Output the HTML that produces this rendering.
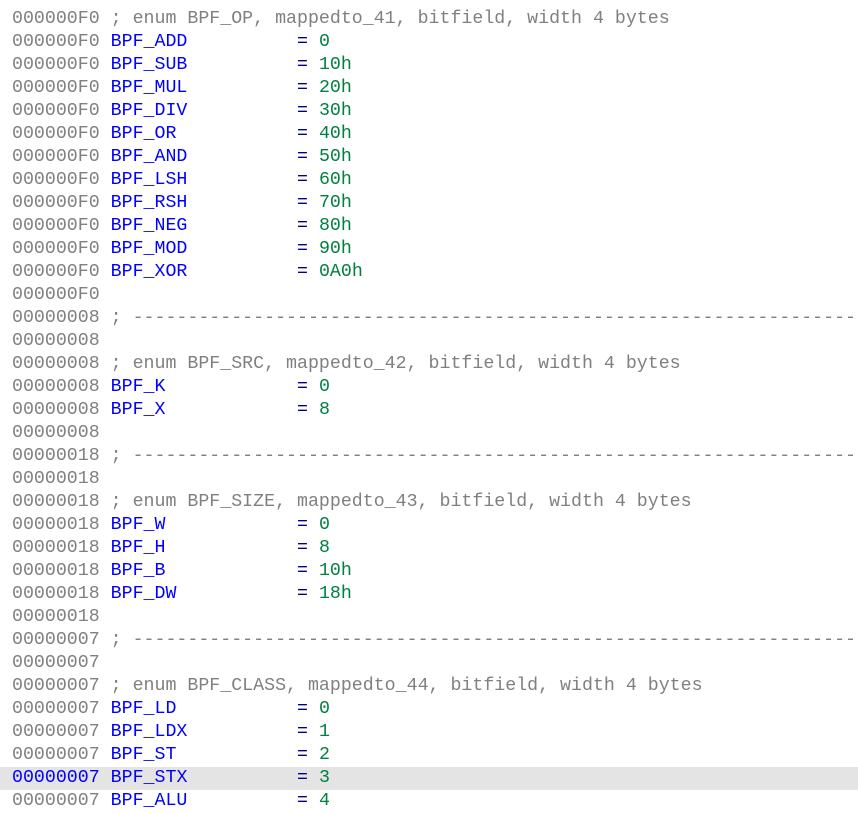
<!DOCTYPE html>
<html><head><style>
body{margin:0;background:#fff;width:858px;height:814px;overflow:hidden}
pre{margin:0;padding:8px 0 0 12px;font:18.27px/23px "Liberation Mono",monospace;color:#808080;white-space:pre}
.l{display:block;height:23px;overflow:hidden}
.h{background:#e4e4e4;margin-left:-12px;padding-left:12px}
.h .a{color:#0000ff}
.b{color:#0000ff}.e{color:#000080}.n{color:#008040}.c{color:#808080}
</style></head><body><pre><span class="l">000000F0 ; enum BPF_OP, mappedto_41, bitfield, width 4 bytes</span><span class="l">000000F0 <span class="b">BPF_ADD</span>          <span class="e">=</span> <span class="n">0</span></span><span class="l">000000F0 <span class="b">BPF_SUB</span>          <span class="e">=</span> <span class="n">10h</span></span><span class="l">000000F0 <span class="b">BPF_MUL</span>          <span class="e">=</span> <span class="n">20h</span></span><span class="l">000000F0 <span class="b">BPF_DIV</span>          <span class="e">=</span> <span class="n">30h</span></span><span class="l">000000F0 <span class="b">BPF_OR</span>           <span class="e">=</span> <span class="n">40h</span></span><span class="l">000000F0 <span class="b">BPF_AND</span>          <span class="e">=</span> <span class="n">50h</span></span><span class="l">000000F0 <span class="b">BPF_LSH</span>          <span class="e">=</span> <span class="n">60h</span></span><span class="l">000000F0 <span class="b">BPF_RSH</span>          <span class="e">=</span> <span class="n">70h</span></span><span class="l">000000F0 <span class="b">BPF_NEG</span>          <span class="e">=</span> <span class="n">80h</span></span><span class="l">000000F0 <span class="b">BPF_MOD</span>          <span class="e">=</span> <span class="n">90h</span></span><span class="l">000000F0 <span class="b">BPF_XOR</span>          <span class="e">=</span> <span class="n">0A0h</span></span><span class="l">000000F0</span><span class="l">00000008 ; ----------------------------------------------------------------------</span><span class="l">00000008</span><span class="l">00000008 ; enum BPF_SRC, mappedto_42, bitfield, width 4 bytes</span><span class="l">00000008 <span class="b">BPF_K</span>            <span class="e">=</span> <span class="n">0</span></span><span class="l">00000008 <span class="b">BPF_X</span>            <span class="e">=</span> <span class="n">8</span></span><span class="l">00000008</span><span class="l">00000018 ; ----------------------------------------------------------------------</span><span class="l">00000018</span><span class="l">00000018 ; enum BPF_SIZE, mappedto_43, bitfield, width 4 bytes</span><span class="l">00000018 <span class="b">BPF_W</span>            <span class="e">=</span> <span class="n">0</span></span><span class="l">00000018 <span class="b">BPF_H</span>            <span class="e">=</span> <span class="n">8</span></span><span class="l">00000018 <span class="b">BPF_B</span>            <span class="e">=</span> <span class="n">10h</span></span><span class="l">00000018 <span class="b">BPF_DW</span>           <span class="e">=</span> <span class="n">18h</span></span><span class="l">00000018</span><span class="l">00000007 ; ----------------------------------------------------------------------</span><span class="l">00000007</span><span class="l">00000007 ; enum BPF_CLASS, mappedto_44, bitfield, width 4 bytes</span><span class="l">00000007 <span class="b">BPF_LD</span>           <span class="e">=</span> <span class="n">0</span></span><span class="l">00000007 <span class="b">BPF_LDX</span>          <span class="e">=</span> <span class="n">1</span></span><span class="l">00000007 <span class="b">BPF_ST</span>           <span class="e">=</span> <span class="n">2</span></span><span class="l h"><span class="a">00000007</span> <span class="b">BPF_STX</span>          <span class="e">=</span> <span class="n">3</span></span><span class="l">00000007 <span class="b">BPF_ALU</span>          <span class="e">=</span> <span class="n">4</span></span></pre></body></html>
